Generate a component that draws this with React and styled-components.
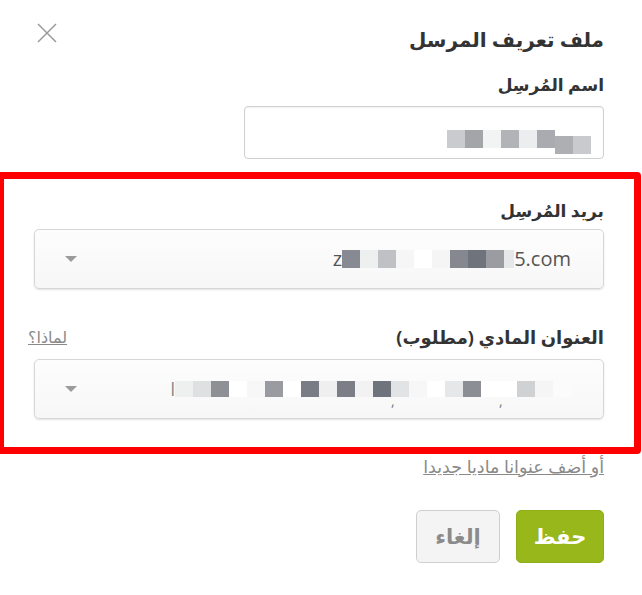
import React from 'react';
import styled, { createGlobalStyle } from 'styled-components';

const Global = createGlobalStyle`
  html, body { margin: 0; padding: 0; background: #fff; }
  body { font-family: "Open Sans", "DejaVu Sans", sans-serif; }
  * { box-sizing: border-box; }
`;

const Modal = styled.div`
  direction: rtl;
  width: 642px;
  padding: 23px 38px 40px 34px;
  color: #333;
`;

const Header = styled.div`
  display: flex;
  justify-content: space-between;
  align-items: flex-start;
`;

const Title = styled.h2`
  margin: 5px 0 0;
  font-size: 20px;
  line-height: 24px;
  font-weight: 700;
  color: #333;
`;

const Close = styled.button`
  margin: 0 0 0 3px;
  padding: 0;
  width: 20px;
  height: 20px;
  border: none;
  background: none;
  display: flex;
  cursor: pointer;
`;

const Field = styled.div`
  display: flex;
  flex-direction: column;
  align-items: flex-start;
  margin-top: ${p => p.$mt || 0}px;
`;

const LabelRow = styled.div`
  width: 100%;
  display: flex;
  justify-content: space-between;
  align-items: center;
`;

const Label = styled.label`
  font-size: ${p => p.$fs || 17}px;
  line-height: 24px;
  font-weight: 700;
  color: #333;
`;

const WhyLink = styled.a`
  margin-left: -6px;
  font-size: 16px;
  color: #8a8a8a;
  text-decoration: underline;
  line-height: 20px;
`;

const TextInput = styled.div`
  margin-top: 9px;
  width: 360px;
  height: 53px;
  border: 1px solid #cfd0d2;
  border-radius: 4px;
  background: #fff;
  box-shadow: inset 0 1px 2px rgba(0, 0, 0, 0.06);
  display: flex;
  align-items: flex-end;
  padding: 0 12px 4px;
`;

const Highlight = styled.section`
  position: relative;
  margin-top: 13px;
  padding: 27px 0 35px;
  &::after {
    content: "";
    position: absolute;
    top: 0;
    bottom: 0;
    left: -37px;
    right: -37px;
    border: 7px solid #ff0000;
    border-radius: 0 4px 4px 0;
    pointer-events: none;
  }
`;

const Select = styled.div`
  margin-top: ${p => p.$mt}px;
  width: 100%;
  height: 60px;
  border: 1px solid #d6d7d9;
  border-radius: 5px;
  background: linear-gradient(#fdfdfd, #f7f7f7);
  box-shadow: 0 1px 2px rgba(0, 0, 0, 0.12);
  display: flex;
  align-items: center;
  justify-content: space-between;
  padding: 0 ${p => p.$pr}px 0 30px;
`;

const Value = styled.div`
  direction: ltr;
  display: flex;
  align-items: center;
  font-size: 20px;
  color: #555;
  line-height: 24px;
`;

const Arrow = styled.span`
  width: 0;
  height: 0;
  border-left: 6px solid transparent;
  border-right: 6px solid transparent;
  border-top: 6px solid #9b9b9b;
  order: 2;
`;

const Mosaic = styled.span`
  display: inline-flex;
  align-items: flex-start;
  height: ${p => p.$h}px;
`;

const Block = styled.span`
  display: inline-block;
  width: ${p => p.$w}px;
  height: ${p => p.$bh}px;
  margin-top: ${p => p.$dy}px;
  background: ${p => p.$c};
`;

const Comma = styled.span`
  display: inline-block;
  width: 0;
  overflow: visible;
  font-size: 14px;
  color: #777;
  position: relative;
  top: 8px;
`;

const Lead = styled.span`
  color: #888;
  font-size: 18px;
`;

const AddLink = styled.a`
  display: block;
  margin-top: 2px;
  font-size: 17.5px;
  line-height: 20px;
  color: #8a8a8a;
  text-decoration: underline;
`;

const Buttons = styled.div`
  margin-top: 34px;
  display: flex;
  gap: 16px;
`;

const Button = styled.button`
  height: 53px;
  width: ${p => p.$w}px;
  border-radius: 5px;
  font-family: "DejaVu Sans", sans-serif;
  font-size: 21px;
  font-weight: 700;
  cursor: pointer;
  border: 1px solid ${p => (p.$primary ? '#8fae17' : '#cfcfcf')};
  background: ${p => (p.$primary ? '#97b71b' : '#f4f4f4')};
  color: ${p => (p.$primary ? '#fff' : '#8b8b8b')};
`;

const nameBlocks = [
  ['#c9cbce', 0], ['#a3a5a9', 0], ['#f2f3f3', 0], ['#b1b3b7', 0],
  ['#ecedef', 0], ['#a9abb0', 0], ['#adafb3', 6], ['#c9cacd', 6],
];

const emailBlocks = [
  '#878a92', '#eeefef', '#c0c1c4', '#f6f6f6', '#ffffff', '#f5f5f5',
  '#868890', '#6f737b', '#9a9ca2', '#e6e7e8',
];

const addrBlocks = [
  '#eef0f0', '#dfe0e1', '#8e9095', '#ffffff', '#f7f7f7', '#999ba1',
  '#ffffff', '#797c84', '#efefef', '#7b7e86', '#f2f2f2', '#6f737b',
  '#e2e3e4', '#f7f7f7', '#ffffff', '#e6e7e8', '#8b8e95', '#ffffff',
  '#ffffff', '#d0d1d2', '#f5f5f5', '#fbfbfb',
];

export default function App() {
  return (
    <>
      <Global />
      <Modal>
        <Header>
          <Title>ملف تعريف المرسل</Title>
          <Close aria-label="إغلاق">
            <svg width="20" height="20" viewBox="0 0 20 20">
              <path d="M1 1 L19 19 M19 1 L1 19" stroke="#9a9a9a" strokeWidth="1.5" fill="none" />
            </svg>
          </Close>
        </Header>

        <Field $mt={21}>
          <Label>اسم المُرسِل</Label>
          <TextInput>
            <Mosaic $h={24} style={{ direction: 'ltr' }}>
              {nameBlocks.map(([c, dy], i) => (
                <Block key={i} $w={18} $bh={18} $dy={dy} $c={c} />
              ))}
            </Mosaic>
          </TextInput>
        </Field>

        <Highlight>
          <Field>
            <Label>بريد المُرسِل</Label>
            <Select $mt={6} $pr={32}>
              <Value>
                z
                <Mosaic $h={18}>
                  {emailBlocks.map((c, i) => (
                    <Block key={i} $w={i === 9 ? 10 : 18} $bh={18} $dy={0} $c={c} />
                  ))}
                </Mosaic>
                5.com
              </Value>
              <Arrow />
            </Select>
          </Field>

          <Field $mt={36}>
            <LabelRow>
              <Label $fs={18}>العنوان المادي (مطلوب)</Label>
              <WhyLink href="#">لماذا؟</WhyLink>
            </LabelRow>
            <Select $mt={10} $pr={32}>
              <Value>
                <Lead>l</Lead>
                <Mosaic $h={16}>
                  {addrBlocks.map((c, i) => (
                    <React.Fragment key={i}>
                      <Block $w={18} $bh={16} $dy={0} $c={c} />
                      {(i === 11 || i === 17) && <Comma>,</Comma>}
                    </React.Fragment>
                  ))}
                </Mosaic>
              </Value>
              <Arrow />
            </Select>
          </Field>
        </Highlight>

        <AddLink href="#">أو أضف عنوانا ماديا جديدا</AddLink>

        <Buttons>
          <Button $primary $w={88}>حفظ</Button>
          <Button $w={84}>إلغاء</Button>
        </Buttons>
      </Modal>
    </>
  );
}
